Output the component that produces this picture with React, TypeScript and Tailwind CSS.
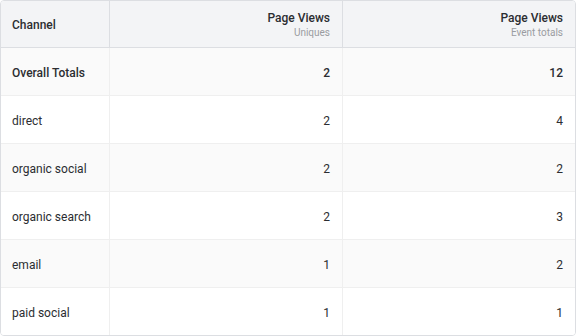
import React from "react";

const rows = [
  { ch: "direct", u: "2", e: "4" },
  { ch: "organic social", u: "2", e: "2" },
  { ch: "organic search", u: "2", e: "3" },
  { ch: "email", u: "1", e: "2" },
  { ch: "paid social", u: "1", e: "1" },
];

export default function App() {
  return (
    <div
      className="w-[576px] h-[336px] bg-white"
      style={{ fontFamily: "Roboto, 'Noto Sans', sans-serif" }}
    >
      <div className="w-full h-full border border-[#dcdee2] rounded-[4px] overflow-hidden text-[12px] text-[#2b2d31] whitespace-nowrap">
        <div className="grid grid-cols-[109px_233px_1fr] h-[47px] bg-[#f3f4f6] border-b border-[#dcdee2]">
          <div className="flex items-center pt-[2px] pl-[11px] pr-3 border-r border-[#dcdee2] font-medium">Channel</div>
          <div className="flex flex-col items-end justify-center pt-[2px] px-3 border-r border-[#dcdee2]">
            <div className="font-medium leading-[15px]">Page Views</div>
            <div className="text-[10px] leading-[13px] text-[#9a9ca1]">Uniques</div>
          </div>
          <div className="flex flex-col items-end justify-center pt-[2px] px-3">
            <div className="font-medium leading-[15px]">Page Views</div>
            <div className="text-[10px] leading-[13px] text-[#9a9ca1]">Event totals</div>
          </div>
        </div>
        <div className="grid grid-cols-[109px_233px_1fr] h-[48px] bg-[#fafafa] border-b border-[#efefef] font-medium">
          <div className="flex items-center pt-[2px] pl-[11px] pr-3 border-r border-[#efefef]">Overall Totals</div>
          <div className="flex items-center justify-end pt-[2px] px-3 border-r border-[#efefef]">2</div>
          <div className="flex items-center justify-end pt-[2px] px-3">12</div>
        </div>
        {rows.map((r, i) => (
          <div
            key={r.ch}
            className={`grid grid-cols-[109px_233px_1fr] h-[48px] ${i < rows.length - 1 ? "border-b border-[#efefef]" : ""} ${i % 2 === 1 ? "bg-[#fafafa]" : "bg-white"}`}
          >
            <div className="flex items-center pt-[2px] pl-[11px] pr-3 border-r border-[#efefef]">{r.ch}</div>
            <div className="flex items-center justify-end pt-[2px] px-3 border-r border-[#efefef]">{r.u}</div>
            <div className="flex items-center justify-end pt-[2px] px-3">{r.e}</div>
          </div>
        ))}
      </div>
    </div>
  );
}
